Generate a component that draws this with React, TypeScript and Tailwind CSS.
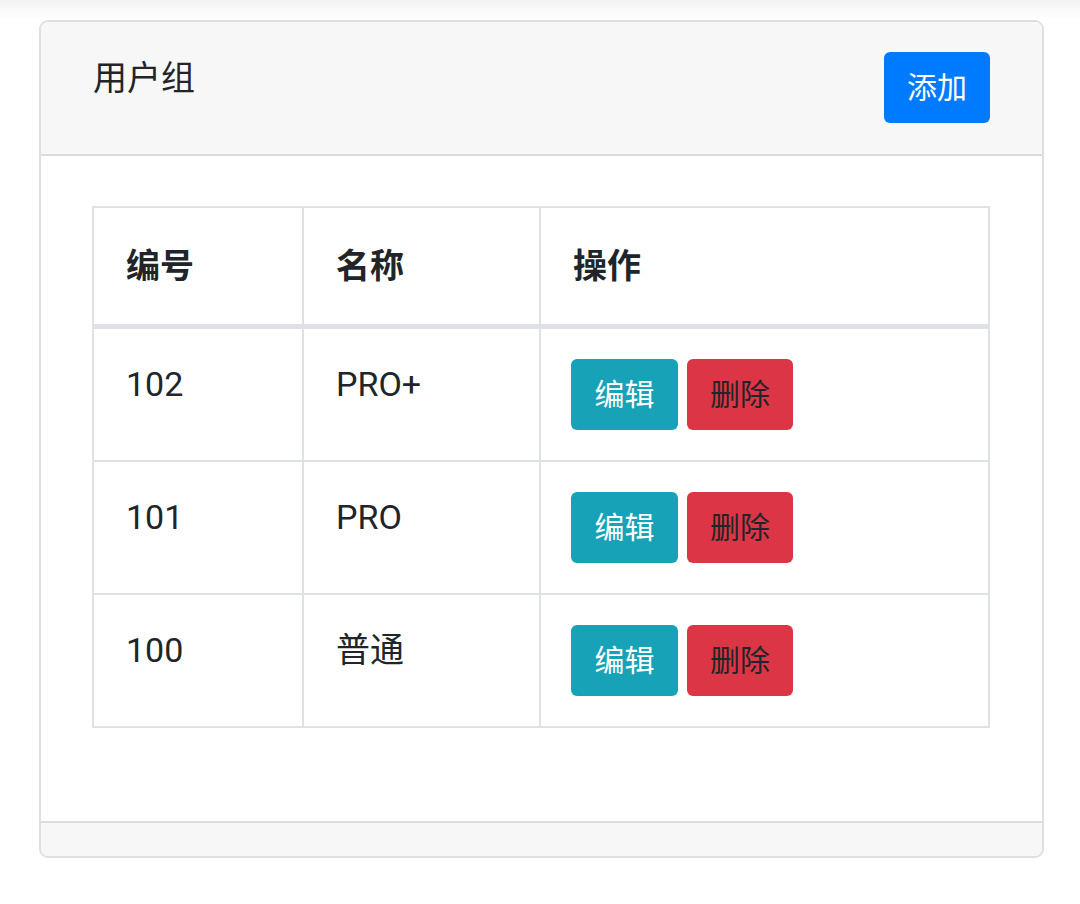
const rows = [
  { id: '102', name: 'PRO+' },
  { id: '101', name: 'PRO' },
  { id: '100', name: '普通' },
];

export default function App() {
  return (
    <div
      className="min-h-[904px] bg-white text-[#212529]"
      style={{ fontFamily: "Roboto, 'Noto Sans CJK SC', sans-serif" }}
    >
      {/* faint top shadow */}
      <div className="h-[20px] bg-gradient-to-b from-[#f3f3f3] to-white" />

      <div className="ml-[39px] mr-[36px] flex flex-col rounded-[9px] border-2 border-[#dfdfdf] overflow-hidden">
        {/* Card header */}
        <div className="flex items-start justify-between bg-[#f7f7f7] border-b-2 border-[#dcdcdc] pl-[52px] pr-[52px] pt-[30px] pb-[31px]">
          <h2 className="text-[34px] leading-[52px] font-normal">用户组</h2>
          <button className="h-[71px] w-[106px] rounded-[6px] bg-[#007bff] text-white text-[30px]">
            添加
          </button>
        </div>

        {/* Card body */}
        <div className="pl-[51px] pr-[52px] pt-[50px] pb-[93px]">
          <table className="w-full border-collapse text-left">
            <thead>
              <tr>
                <th className="w-[210px] border-2 border-b-[5px] border-[#dee2e6] px-[32px] pt-[33px] pb-[32px] text-[34px] leading-[51px] font-bold align-top">
                  编号
                </th>
                <th className="w-[237px] border-2 border-b-[5px] border-[#dee2e6] px-[32px] pt-[33px] pb-[32px] text-[34px] leading-[51px] font-bold align-top">
                  名称
                </th>
                <th className="border-2 border-b-[5px] border-[#dee2e6] px-[32px] pt-[33px] pb-[32px] text-[34px] leading-[51px] font-bold align-top">
                  操作
                </th>
              </tr>
            </thead>
            <tbody>
              {rows.map((r, i) => (
                <tr key={r.id}>
                  <td className={`border-2 border-[#dee2e6] px-[32px] pt-[30px] text-[34px] leading-[51px] align-top ${i === 2 ? 'pb-[33px]' : 'pb-[31px]'}`}>
                    {r.id}
                  </td>
                  <td className="border-2 border-[#dee2e6] px-[32px] pt-[30px] pb-[31px] text-[34px] leading-[51px] align-top">
                    {r.name}
                  </td>
                  <td className="border-2 border-[#dee2e6] pl-[30px] pr-[31px] pt-[30px] pb-[30px] align-top">
                    <div className="flex gap-[9px]">
                      <button className="h-[71px] w-[107px] rounded-[6px] bg-[#17a2b8] text-white text-[30px]">
                        编辑
                      </button>
                      <button className="h-[71px] w-[106px] rounded-[6px] bg-[#dc3545] text-[#212529] text-[30px]">
                        删除
                      </button>
                    </div>
                  </td>
                </tr>
              ))}
            </tbody>
          </table>
        </div>

        {/* Card footer */}
        <div className="h-[35px] bg-[#f7f7f7] border-t-2 border-[#dcdcdc]" />
      </div>
    </div>
  );
}
